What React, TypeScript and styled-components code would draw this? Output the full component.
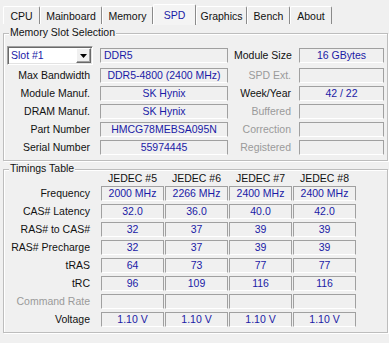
import React from 'react';
import styled, { createGlobalStyle } from 'styled-components';

const Global = createGlobalStyle`
  html, body { margin: 0; padding: 0; background: #f0f0f0; }
  body { font-family: "Liberation Sans", Arial, sans-serif; }
`;

const BLUE = '#1a1aa6';

const Window = styled.div`
  width: 389px;
  height: 343px;
  overflow: hidden;
  background: #f0f0f0;
  color: #111;
  font-family: "Liberation Sans", Arial, sans-serif;
  font-size: 10.5px;
`;

const TabStrip = styled.div`
  display: flex;
  align-items: flex-end;
  height: 24px;
  padding-left: 3px;
`;

const Tab = styled.div<{ $active?: boolean; $w: number }>`
  box-sizing: border-box;
  width: ${p => p.$w}px;
  height: ${p => (p.$active ? 21 : 18)}px;
  margin-bottom: ${p => (p.$active ? -1 : 0)}px;
  display: flex;
  align-items: center;
  justify-content: center;
  border-top: 1px solid #fff;
  border-left: 1px solid #fff;
  border-right: 1px solid #8a8a8a;
  border-radius: 2px 2px 0 0;
  background: ${p => (p.$active ? '#f4f4f4' : '#f0f0f0')};
  color: ${p => (p.$active ? BLUE : '#111')};
  position: relative;
  z-index: ${p => (p.$active ? 1 : 0)};
`;

const Group = styled.div<{ $mt: number }>`
  position: relative;
  box-sizing: border-box;
  width: 385px;
  margin: ${p => p.$mt}px 0 0 3px;
  border: 1px solid #bdbdbd;
  box-shadow: inset 1px 1px 0 #fff, 1px 1px 0 #fff;
`;

const Legend = styled.span`
  position: absolute;
  top: -8px;
  left: 5px;
  padding: 0 1px;
  line-height: 13px;
  background: #f0f0f0;
  color: #111;
`;

const SlotGrid = styled.div`
  display: grid;
  grid-template-columns: 96px 134px 65px 85px;
  grid-template-rows: 22px repeat(5, 18px);
  align-items: start;
  padding: 12px 2px 2px 0;
`;

const Label = styled.div<{ $disabled?: boolean; $pr: number; $mt?: number }>`
  text-align: right;
  line-height: 15px;
  height: 15px;
  padding-right: ${p => p.$pr}px;
  margin-top: ${p => p.$mt ?? 0}px;
  white-space: nowrap;
  color: ${p => (p.$disabled ? '#9a9a9a' : '#111')};
`;

const Field = styled.div<{ $w: number; $left?: boolean; $mt?: number }>`
  box-sizing: border-box;
  width: ${p => p.$w}px;
  height: 15px;
  margin-top: ${p => p.$mt ?? 0}px;
  border-style: solid;
  border-width: 1px;
  border-color: #a0a0a0 #a0a0a0 #fff #a0a0a0;
  line-height: 13px;
  padding: 0 ${p => (p.$left ? 3 : 0)}px;
  text-align: ${p => (p.$left ? 'left' : 'center')};
  white-space: nowrap;
  overflow: hidden;
  color: ${BLUE};
`;

const Combo = styled.div`
  box-sizing: border-box;
  width: 86px;
  height: 19px;
  margin-left: 3px;
  display: flex;
  background: #fff;
  border: 1px solid;
  border-color: #a0a0a0 #fff #fff #a0a0a0;
  box-shadow: inset 1px 1px 0 #696969, inset -1px -1px 0 #e3e3e3;
  padding: 2px;
`;

const ComboText = styled.div`
  flex: 1;
  line-height: 13px;
  padding-left: 1px;
  color: ${BLUE};
`;

const ComboButton = styled.div`
  box-sizing: border-box;
  width: 15px;
  display: flex;
  align-items: center;
  justify-content: center;
  background: #f0f0f0;
  border: 1px solid;
  border-color: #fff #696969 #696969 #fff;
  box-shadow: inset -1px -1px 0 #a0a0a0;
  margin: -1px -1px -1px 0;
`;

const TimingGrid = styled.div`
  display: grid;
  grid-template-columns: 96px repeat(4, 63px);
  column-gap: 1px;
  grid-template-rows: 16px repeat(8, 18px);
  align-items: start;
  padding: 0 0 2px 0;
`;

const ColHead = styled.div`
  line-height: 16px;
  text-align: center;
  color: #111;
  white-space: nowrap;
`;

const Blank = styled.div``;

const tabs = [
  { t: 'CPU', w: 37 },
  { t: 'Mainboard', w: 62 },
  { t: 'Memory', w: 51 },
  { t: 'SPD', w: 43, active: true },
  { t: 'Graphics', w: 51 },
  { t: 'Bench', w: 43 },
  { t: 'About', w: 42 },
];

const slotRows: { l: string; v: string; rl: string; rv: string; rd?: boolean }[] = [
  { l: 'Max Bandwidth', v: 'DDR5-4800 (2400 MHz)', rl: 'SPD Ext.', rv: '', rd: true },
  { l: 'Module Manuf.', v: 'SK Hynix', rl: 'Week/Year', rv: '42 / 22' },
  { l: 'DRAM Manuf.', v: 'SK Hynix', rl: 'Buffered', rv: '', rd: true },
  { l: 'Part Number', v: 'HMCG78MEBSA095N', rl: 'Correction', rv: '', rd: true },
  { l: 'Serial Number', v: '55974445', rl: 'Registered', rv: '', rd: true },
];

const timings: { l: string; v: string[]; d?: boolean }[] = [
  { l: 'Frequency', v: ['2000 MHz', '2266 MHz', '2400 MHz', '2400 MHz'] },
  { l: 'CAS# Latency', v: ['32.0', '36.0', '40.0', '42.0'] },
  { l: 'RAS# to CAS#', v: ['32', '37', '39', '39'] },
  { l: 'RAS# Precharge', v: ['32', '37', '39', '39'] },
  { l: 'tRAS', v: ['64', '73', '77', '77'] },
  { l: 'tRC', v: ['96', '109', '116', '116'] },
  { l: 'Command Rate', v: ['', '', '', ''], d: true },
  { l: 'Voltage', v: ['1.10 V', '1.10 V', '1.10 V', '1.10 V'] },
];

export default function App() {
  return (
    <Window>
      <Global />
      <TabStrip>
        {tabs.map(t => (
          <Tab key={t.t} $w={t.w} $active={t.active}>
            {t.t}
          </Tab>
        ))}
      </TabStrip>

      <Group $mt={9}>
        <Legend>Memory Slot Selection</Legend>
        <SlotGrid>
          <Combo>
            <ComboText>Slot #1</ComboText>
            <ComboButton>
              <svg width="7" height="4" viewBox="0 0 7 4">
                <path d="M0 0H7L3.5 4Z" fill="#000" />
              </svg>
            </ComboButton>
          </Combo>
          <Field $w={128} $left $mt={2}>DDR5</Field>
          <Label $pr={8} $mt={2}>Module Size</Label>
          <Field $w={85} $mt={2}>16 GBytes</Field>
          {slotRows.map(r => (
            <React.Fragment key={r.l}>
              <Label $pr={10}>{r.l}</Label>
              <Field $w={128}>{r.v}</Field>
              <Label $pr={8} $disabled={r.rd}>{r.rl}</Label>
              <Field $w={85}>{r.rv}</Field>
            </React.Fragment>
          ))}
        </SlotGrid>
      </Group>

      <Group $mt={8}>
        <Legend>Timings Table</Legend>
        <TimingGrid>
          <Blank />
          {['JEDEC #5', 'JEDEC #6', 'JEDEC #7', 'JEDEC #8'].map(h => (
            <ColHead key={h}>{h}</ColHead>
          ))}
          {timings.map(r => (
            <React.Fragment key={r.l}>
              <Label $pr={10} $disabled={r.d}>{r.l}</Label>
              {r.v.map((v, i) => (
                <Field key={i} $w={63}>{v}</Field>
              ))}
            </React.Fragment>
          ))}
        </TimingGrid>
      </Group>
    </Window>
  );
}
